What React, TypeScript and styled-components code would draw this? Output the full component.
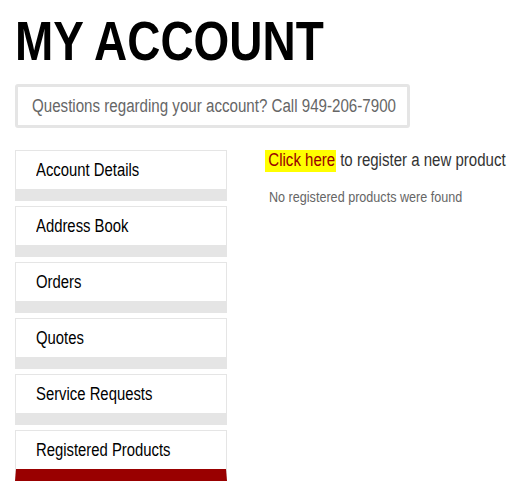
import styled, { createGlobalStyle } from "styled-components";

const GlobalStyle = createGlobalStyle`
  body {
    margin: 0;
    background: #fff;
    overflow-x: hidden;
    font-family: "Liberation Sans", Arial, sans-serif;
  }
`;

// no condensed face is installed, so squeeze the regular one
const Narrow = styled.span<{ $scale?: number }>`
  display: inline-block;
  transform: scaleX(${(p) => p.$scale ?? 0.83});
  transform-origin: left center;
  white-space: nowrap;
`;

const Page = styled.div`
  padding: 13px 0 0 15px;
`;

const Heading = styled.h1`
  margin: 0;
  font-size: 56px;
  line-height: 56px;
  font-weight: 700;
  color: #000;
`;

const Notice = styled.div`
  margin-top: 15px;
  width: 395px;
  box-sizing: border-box;
  height: 44px;
  border: 3px solid #e5e5e5;
  border-radius: 3px;
  padding: 0 14px;
  font-size: 18px;
  line-height: 38px;
  color: #666;
`;

const Columns = styled.div`
  display: flex;
  gap: 38px;
  margin-top: 22px;
`;

const Menu = styled.nav`
  display: flex;
  flex-direction: column;
  gap: 5px;
  width: 212px;
  flex-shrink: 0;
`;

const MenuItem = styled.a<{ $active?: boolean }>`
  display: block;
  border: 1px solid #e5e5e5;
  border-bottom: 12px solid ${(p) => (p.$active ? "#990000" : "#e5e5e5")};
  padding-left: 20px;
  font-size: 18px;
  line-height: 38px;
  color: #000;
  text-decoration: none;
  cursor: pointer;
`;

const Content = styled.div`
  flex: 1;
  min-width: 0;
  overflow: hidden;
`;

const RegisterLine = styled.p`
  margin: -2px 0 0 0;
  font-size: 18px;
  line-height: 24px;
  color: #333;
`;

const Highlight = styled.a`
  background: #ffff00;
  color: #990000;
  padding: 2px 1px 2px 4px;
  text-decoration: none;
`;

const Empty = styled.p`
  margin: 16px 0 0 4px;
  font-size: 15px;
  color: #666;
`;

const menuItems = [
  "Account Details",
  "Address Book",
  "Orders",
  "Quotes",
  "Service Requests",
  "Registered Products",
];

export default function App() {
  return (
    <Page>
      <GlobalStyle />
      <Heading>
        <Narrow $scale={0.82}>MY ACCOUNT</Narrow>
      </Heading>
      <Notice>
        <Narrow $scale={0.84}>
          Questions regarding your account? Call 949-206-7900
        </Narrow>
      </Notice>
      <Columns>
        <Menu>
          {menuItems.map((label) => (
            <MenuItem key={label} $active={label === "Registered Products"}>
              <Narrow $scale={0.825}>{label}</Narrow>
            </MenuItem>
          ))}
        </Menu>
        <Content>
          <RegisterLine>
            <Narrow $scale={0.835}>
              <Highlight>Click here</Highlight> to register a new product
            </Narrow>
          </RegisterLine>
          <Empty>
            <Narrow $scale={0.84}>No registered products were found</Narrow>
          </Empty>
        </Content>
      </Columns>
    </Page>
  );
}
